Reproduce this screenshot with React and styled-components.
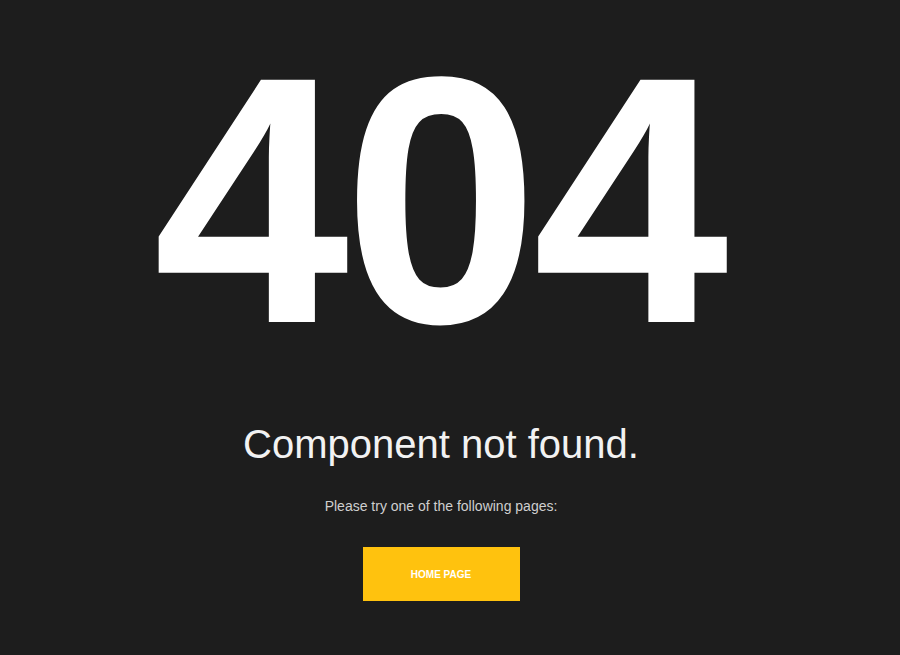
import React from "react";
import styled, { createGlobalStyle } from "styled-components";

const Global = createGlobalStyle`
  html, body {
    margin: 0;
    padding: 0;
    background: #1d1d1d;
  }
  body {
    font-family: "Liberation Sans", Arial, sans-serif;
  }
`;

const Page = styled.main`
  min-height: 655px;
  box-sizing: border-box;
  display: flex;
  flex-direction: column;
  align-items: center;
  padding: 70px 18px 0 0;
  background: #1d1d1d;
`;

const Code = styled.h1`
  margin: 0 6px 0 0;
  font-family: "Liberation Sans", Arial, sans-serif;
  font-weight: 700;
  font-size: 352px;
  line-height: 260px;
  letter-spacing: -6px;
  color: #ffffff;
`;

const Title = styled.h2`
  margin: 90px 0 0;
  font-family: "Liberation Sans", Arial, sans-serif;
  font-weight: 400;
  font-size: 40px;
  line-height: 48px;
  color: #f2f2f2;
`;

const Hint = styled.p`
  margin: 28px 0 0;
  font-size: 14px;
  line-height: 20px;
  color: #cfcfcf;
`;

const HomeButton = styled.a`
  margin-top: 31px;
  width: 157px;
  height: 54px;
  display: flex;
  align-items: center;
  justify-content: center;
  background: #ffc20e;
  color: #ffffff;
  font-size: 10px;
  font-weight: 700;
  text-transform: uppercase;
  text-decoration: none;
  cursor: pointer;
`;

export default function App() {
  return (
    <>
      <Global />
      <Page>
        <Code>404</Code>
        <Title>Component not found.</Title>
        <Hint>Please try one of the following pages:</Hint>
        <HomeButton href="#">Home Page</HomeButton>
      </Page>
    </>
  );
}
